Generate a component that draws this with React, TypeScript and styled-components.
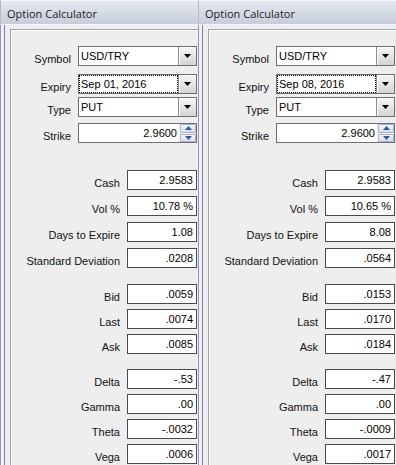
import React from "react";
import styled, { createGlobalStyle } from "styled-components";

const Global = createGlobalStyle`
  html, body { margin: 0; padding: 0; background: #eeeeee; }
  body { width: 396px; height: 465px; overflow: hidden; }
`;

const UI_FONT = `"Liberation Sans", Arial, sans-serif`;

const Screen = styled.div`
  display: flex;
  width: 396px;
  height: 465px;
  overflow: hidden;
  background: #eeeeee;
`;

const Panel = styled.div`
  width: 198px;
  flex: none;
  display: flex;
  flex-direction: column;
  overflow: hidden;
`;

const TitleBar = styled.div`
  height: 25px;
  flex: none;
  box-sizing: border-box;
  background: linear-gradient(#e6e9f0, #c7ccda);
  border-left: 1px solid #b4b9ca;
  border-top: 1px solid #f2f4f8;
  border-bottom: 1px solid #f4f5f8;
  padding: 5px 0 0 6px;
  font-family: "Open Sans", "Noto Sans", sans-serif;
  font-size: 11px;
  line-height: 16px;
  color: #1c1c1c;
  white-space: nowrap;
`;

const Frame = styled.div`
  flex: 1;
  display: flex;
  border-left: 1px solid #9694c3;
  background: #f1f1f1;
  padding-left: 3px;
`;

const Body = styled.div`
  flex: 1;
  display: flex;
  border-left: 1px solid #7e7cb4;
  background: #eeeeee;
  padding: 4px 0 0 5px;
`;

const Group = styled.div`
  flex: 1;
  display: flex;
  flex-direction: column;
  border-top: 1px solid #a2a2a2;
  border-left: 1px solid #a2a2a2;
  box-shadow: inset 1px 1px 0 #ffffff;
  padding: 1px 0 0 1px;
`;

const Row = styled.div<{ $mt: number; $labelW: number; $fieldW: number }>`
  display: grid;
  grid-template-columns: ${(p) => p.$labelW}px ${(p) => p.$fieldW}px;
  column-gap: 7px;
  align-items: end;
  height: 20px;
  flex: none;
  margin-top: ${(p) => p.$mt}px;
`;

const Label = styled.div`
  font-family: ${UI_FONT};
  font-size: 11px;
  line-height: 13px;
  color: #111111;
  text-align: right;
  white-space: nowrap;
`;

const Field = styled.div`
  height: 20px;
  box-sizing: border-box;
  border: 1px solid #4a4a4a;
  background: #ffffff;
  padding-right: 3px;
  font-family: ${UI_FONT};
  font-size: 11px;
  line-height: 18px;
  color: #000000;
  text-align: right;
  white-space: nowrap;
`;

const Combo = styled.div`
  height: 20px;
  box-sizing: border-box;
  border: 1px solid #6e6e6e;
  background: #ffffff;
  display: flex;
`;

const ComboText = styled.div<{ $focus?: boolean }>`
  flex: 1;
  box-sizing: border-box;
  border: 1px ${(p) => (p.$focus ? "dotted #000000" : "solid transparent")};
  padding-left: 1px;
  font-family: ${UI_FONT};
  font-size: 11px;
  line-height: 16px;
  color: #000000;
  white-space: nowrap;
`;

const DropButton = styled.div`
  width: 18px;
  flex: none;
  box-sizing: border-box;
  border-left: 1px solid #8c8c8c;
  background: linear-gradient(#f6f6f6, #d4d4d4);
  box-shadow: inset 1px 1px 0 #ffffff;
  display: flex;
  align-items: center;
  justify-content: center;
`;

const SpinText = styled.div`
  flex: 1;
  padding-right: 2px;
  font-family: ${UI_FONT};
  font-size: 11px;
  line-height: 18px;
  color: #000000;
  text-align: right;
`;

const SpinColumn = styled.div`
  width: 16px;
  flex: none;
  display: flex;
  flex-direction: column;
  gap: 1px;
  padding: 0 0 0 1px;
  background: #f0f0f0;
`;

const SpinButton = styled.div`
  flex: 1;
  box-sizing: border-box;
  border: 1px solid #aab3c6;
  border-radius: 1px;
  background: linear-gradient(#f3f5f9, #d9dfe9);
  display: flex;
  align-items: center;
  justify-content: center;
`;

const Arrow = ({ up, color }: { up?: boolean; color: string }) => (
  <svg width="7" height="4" viewBox="0 0 7 4">
    <polygon points={up ? "0,4 7,4 3.5,0" : "0,0 7,0 3.5,4"} fill={color} />
  </svg>
);

type Stat = { label: string; value: string; mt: number };

type Calc = {
  expiry: string;
  stats: Stat[];
};

const makeStats = (v: string[]): Stat[] => {
  const labels = [
    "Cash",
    "Vol %",
    "Days to Expire",
    "Standard Deviation",
    "Bid",
    "Last",
    "Ask",
    "Delta",
    "Gamma",
    "Theta",
    "Vega",
  ];
  const margins = [27, 6, 6, 6, 16, 5, 5, 15, 5, 5, 5];
  return labels.map((label, i) => ({ label, value: v[i], mt: margins[i] }));
};

const calcs: Calc[] = [
  {
    expiry: "Sep 01, 2016",
    stats: makeStats([
      "2.9583",
      "10.78 %",
      "1.08",
      ".0208",
      ".0059",
      ".0074",
      ".0085",
      "-.53",
      ".00",
      "-.0032",
      ".0006",
    ]),
  },
  {
    expiry: "Sep 08, 2016",
    stats: makeStats([
      "2.9583",
      "10.65 %",
      "8.08",
      ".0564",
      ".0153",
      ".0170",
      ".0184",
      "-.47",
      ".00",
      "-.0009",
      ".0017",
    ]),
  },
];

const TOP = { labelW: 59, fieldW: 119 };
const BOTTOM = { labelW: 108, fieldW: 70 };

const Calculator = ({ calc }: { calc: Calc }) => (
  <Panel>
    <TitleBar>Option Calculator</TitleBar>
    <Frame>
      <Body>
        <Group>
          <Row $mt={15} $labelW={TOP.labelW} $fieldW={TOP.fieldW}>
            <Label>Symbol</Label>
            <Combo>
              <ComboText>USD/TRY</ComboText>
              <DropButton>
                <Arrow color="#000" />
              </DropButton>
            </Combo>
          </Row>
          <Row $mt={8} $labelW={TOP.labelW} $fieldW={TOP.fieldW}>
            <Label>Expiry</Label>
            <Combo>
              <ComboText $focus>{calc.expiry}</ComboText>
              <DropButton>
                <Arrow color="#000" />
              </DropButton>
            </Combo>
          </Row>
          <Row $mt={3} $labelW={TOP.labelW} $fieldW={TOP.fieldW}>
            <Label>Type</Label>
            <Combo>
              <ComboText>PUT</ComboText>
              <DropButton>
                <Arrow color="#000" />
              </DropButton>
            </Combo>
          </Row>
          <Row $mt={6} $labelW={TOP.labelW} $fieldW={TOP.fieldW}>
            <Label>Strike</Label>
            <Combo>
              <SpinText>2.9600</SpinText>
              <SpinColumn>
                <SpinButton>
                  <Arrow up color="#2f5aa6" />
                </SpinButton>
                <SpinButton>
                  <Arrow color="#2f5aa6" />
                </SpinButton>
              </SpinColumn>
            </Combo>
          </Row>
          {calc.stats.map((s) => (
            <Row key={s.label} $mt={s.mt} $labelW={BOTTOM.labelW} $fieldW={BOTTOM.fieldW}>
              <Label>{s.label}</Label>
              <Field>{s.value}</Field>
            </Row>
          ))}
        </Group>
      </Body>
    </Frame>
  </Panel>
);

export default function App() {
  return (
    <>
      <Global />
      <Screen>
        {calcs.map((c) => (
          <Calculator key={c.expiry} calc={c} />
        ))}
      </Screen>
    </>
  );
}
